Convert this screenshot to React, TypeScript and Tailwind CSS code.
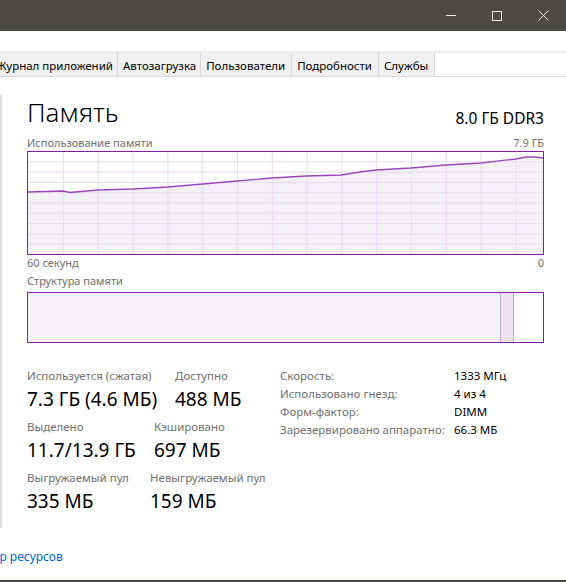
import React from "react";

const font = { fontFamily: '"Noto Sans", "Open Sans", sans-serif' };

const tabs = ["Журнал приложений", "Автозагрузка", "Пользователи", "Подробности", "Службы"];

// memory usage history, in chart coordinates (516 x 103)
const usage: [number, number][] = [
  [0, 41], [36, 40], [43, 41.5], [71, 39], [106, 38], [141, 36], [176, 33], [210, 30],
  [245, 27], [279, 25], [314, 24], [333, 21], [349, 19], [384, 17], [419, 14],
  [454, 12], [489, 8], [499, 6], [508, 6], [516, 7],
];

function UsageChart() {
  const W = 516;
  const H = 103;
  const line = usage.map(([x, y]) => `${x},${y}`).join(" ");
  const area = `0,${H} ${line} ${W},${H}`;
  return (
    <svg width={W + 1} height={H + 1} className="block">
      <polygon points={area} fill="#f3f1f5" />
      {Array.from({ length: 9 }, (_, i) => (
        <line key={"h" + i} x1={0} x2={W} y1={10.3 * (i + 1) + 0.5} y2={10.3 * (i + 1) + 0.5} stroke="#ead9f0" strokeWidth={1} />
      ))}
      {Array.from({ length: 14 }, (_, i) => (
        <line key={"v" + i} x1={36.5 + 34.8 * i} x2={36.5 + 34.8 * i} y1={0} y2={H} stroke="#ead9f0" strokeWidth={1} />
      ))}
      <polyline points={line} fill="none" stroke="#9a47bd" strokeWidth={1.3} />
      <rect x={0.5} y={0.5} width={W} height={H} fill="none" stroke="#8b19ad" strokeWidth={1} />
    </svg>
  );
}

function Stat({ label, value, className }: { label: string; value: string; className?: string }) {
  return (
    <div className={className}>
      <div className="text-[11.5px] leading-[16px] text-[#707070] whitespace-nowrap">{label}</div>
      <div className="text-[19px] leading-[24px] text-black mt-[3px] whitespace-nowrap">{value}</div>
    </div>
  );
}

const specs: [string, string][] = [
  ["Скорость:", "1333 МГц"],
  ["Использовано гнезд:", "4 из 4"],
  ["Форм-фактор:", "DIMM"],
  ["Зарезервировано аппаратно:", "66.3 МБ"],
];

export default function App() {
  return (
    <div className="w-[566px] h-[582px] bg-white overflow-hidden flex flex-col" style={font}>
      {/* title bar */}
      <div className="h-[31px] bg-[#4b4946] flex justify-end items-center shrink-0">
        <div className="w-[46px] flex justify-center">
          <div className="w-[10px] h-px bg-[#e8e8e8]" />
        </div>
        <div className="w-[46px] flex justify-center">
          <div className="w-[10px] h-[10px] border border-[#e8e8e8]" />
        </div>
        <div className="w-[46px] flex justify-center">
          <svg width="11" height="11" viewBox="0 0 11 11">
            <path d="M0.5 0.5 L10.5 10.5 M10.5 0.5 L0.5 10.5" stroke="#e8e8e8" strokeWidth="1" />
          </svg>
        </div>
      </div>

      <div className="h-[20px] bg-white shrink-0" />

      {/* tab strip */}
      <div className="h-[26px] border-t-2 border-b border-[#ececec] border-b-[#dadada] flex shrink-0">
        <div className="flex -ml-[9px] h-full">
          {tabs.map((t, i) => (
            <div
              key={t}
              className={
                "h-full pl-[5px] pt-[2px] flex items-center bg-[#f0f0f0] border-r border-[#d9d9d9] text-[11.5px] text-black whitespace-nowrap " +
                (i < 2 ? "pr-[4px]" : "pr-[6px]")
              }
            >
              {t}
            </div>
          ))}
        </div>
      </div>

      {/* performance page */}
      <div className="mt-[18px] h-[433px] border-l-2 border-[#dcdcdc] pl-[25px] pr-[22px] shrink-0">
        <div className="flex items-end justify-between h-[34px]">
          <div className="text-[26px] leading-[34px] font-light text-black">Память</div>
          <div className="text-[15.5px] leading-[20px] text-black mb-[1px]">8.0 ГБ DDR3</div>
        </div>

        <div className="flex justify-between text-[11px] leading-[14px] text-[#707070] mt-[7px]">
          <span>Использование памяти</span>
          <span>7.9 ГБ</span>
        </div>
        <div className="mt-[1px]">
          <UsageChart />
        </div>
        <div className="flex justify-between text-[11px] leading-[14px] text-[#707070] mt-[1px]">
          <span>60 секунд</span>
          <span>0</span>
        </div>

        <div className="text-[11px] leading-[14px] text-[#707070] mt-[4px]">Структура памяти</div>
        <div className="mt-[4px] w-[517px] h-[51px] border border-[#8b19ad] flex">
          <div className="w-[472px] bg-[#f3f1f5]" />
          <div className="w-[14px] bg-[#ece2f0] border-x border-[#c8a6d6]" />
          <div className="flex-1 bg-white" />
        </div>

        <div className="flex mt-[25px]">
          <div className="w-[253px] flex flex-col gap-[8px]">
            <div className="flex">
              <Stat label="Используется (сжатая)" value="7.3 ГБ (4.6 МБ)" className="w-[148px]" />
              <Stat label="Доступно" value="488 МБ" />
            </div>
            <div className="flex">
              <Stat label="Выделено" value="11.7/13.9 ГБ" className="w-[127px]" />
              <Stat label="Кэшировано" value="697 МБ" />
            </div>
            <div className="flex">
              <Stat label="Выгружаемый пул" value="335 МБ" className="w-[123px]" />
              <Stat label="Невыгружаемый пул" value="159 МБ" />
            </div>
          </div>
          <div className="flex flex-col text-[11.5px] leading-[18px] -mt-[1px]">
            {specs.map(([k, v]) => (
              <div key={k} className="flex">
                <span className="w-[174px] text-[#707070] whitespace-nowrap">{k}</span>
                <span className="text-black">{v}</span>
              </div>
            ))}
          </div>
        </div>
      </div>

      <div className="flex-1 flex items-center pt-[5px]">
        <span className="-ml-[46px] text-[12px] text-[#0066cc] whitespace-nowrap">Монитор ресурсов</span>
      </div>
      <div className="h-[2px] bg-[#4b4946] shrink-0" />
    </div>
  );
}
